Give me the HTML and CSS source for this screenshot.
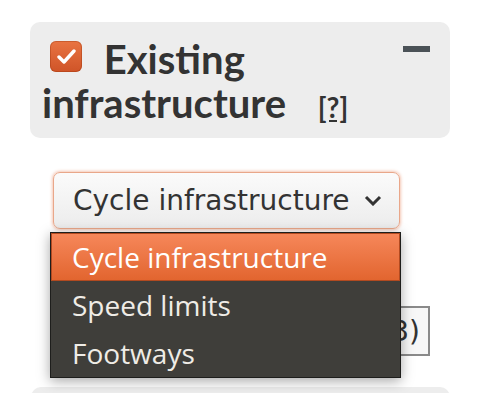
FILE: index.html
```html
<!DOCTYPE html>
<html lang="en">
<head>
    <meta charset="UTF-8">
    <title>Existing infrastructure</title>
    <link rel="stylesheet" href="styles.css">
</head>
<body>
    <div class="panel">
        <div class="panel-head">
            <h2 class="title">
                <span class="check"><svg width="19" height="15" viewBox="0 0 19 15"><path d="M2 8 L7 13 L17 2" fill="none" stroke="#fff" stroke-width="3.4" stroke-linecap="round" stroke-linejoin="round"/></svg></span>
                Existing infrastructure <a class="help" href="#">[?]</a>
            </h2>
            <div class="collapse"></div>
        </div>
    </div>

    <div class="controls">
        <div class="select">
            <span>Cycle infrastructure</span>
            <svg class="chev" width="18" height="11" viewBox="0 0 18 11"><path d="M2 2 L9 9 L16 2" fill="none" stroke="#333" stroke-width="3"/></svg>
        </div>
        <div class="row">
            <button class="btn">Layers (3)</button>
        </div>
    </div>

    <div class="panel next"></div>

    <ul class="menu">
        <li class="opt selected">Cycle infrastructure</li>
        <li class="opt">Speed limits</li>
        <li class="opt">Footways</li>
    </ul>
</body>
</html>
```

FILE: styles.css
```css
html {
    overflow: hidden;
}

body {
    margin: 0;
    background: #fff;
    font-family: 'DejaVu Sans', sans-serif;
    color: #333;
}

.panel {
    margin: 22px 33px 0 30px;
    padding: 15px 12px 13px 12px;
    background: #ededed;
    border-radius: 10px;
}

.panel-head {
    display: flex;
    justify-content: space-between;
    align-items: flex-start;
}

.title {
    margin: 0;
    font-family: Lato, sans-serif;
    font-weight: 700;
    font-size: 40px;
    line-height: 44px;
    color: #333;
}

.check {
    display: inline-block;
    box-sizing: border-box;
    width: 32px;
    height: 31px;
    padding: 8px 0 0 7px;
    margin: 0 12px 0 8px;
    border-radius: 6px;
    background: linear-gradient(#e97442, #cf5428);
    box-shadow: inset 0 0 0 1px rgba(150, 50, 10, 0.35);
    vertical-align: 2px;
}

.check svg {
    display: block;
}

.help {
    margin-left: 22px;
    font-size: 28px;
    line-height: 20px;
    color: #333;
    text-decoration: underline;
}

.collapse {
    flex-shrink: 0;
    width: 27px;
    height: 6px;
    margin: 9px 8px 0 0;
    background: #4b5257;
}

.controls {
    padding: 34px 53px 0 53px;
}

.select {
    display: flex;
    align-items: center;
    justify-content: space-between;
    box-sizing: border-box;
    width: 347px;
    height: 57px;
    padding: 0 17px 0 19px;
    border: 1px solid #e9a78a;
    border-radius: 7px;
    background: linear-gradient(#fbfbfb, #ececec);
    box-shadow: 0 0 3px 1px rgba(230, 130, 90, 0.45);
    font-size: 28px;
    color: #333;
}

.row {
    display: flex;
    justify-content: flex-end;
    margin-top: 77px;
}

.btn {
    height: 50px;
    padding: 0 8px;
    border: 2px solid #8a8a8a;
    background: #f7f7f7;
    font-family: 'DejaVu Sans', sans-serif;
    font-size: 28px;
    color: #333;
}

.next {
    margin-top: 31px;
    margin-left: 31px;
    height: 20px;
    padding: 0;
}

.menu {
    position: absolute;
    left: 50px;
    top: 232px;
    width: 349px;
    margin: 0;
    padding: 0;
    list-style: none;
    background: #3f3e3a;
    border: 1px solid #1e1e1c;
    box-shadow: 0 3px 12px rgba(0, 0, 0, 0.35);
}

.opt {
    height: 48px;
    padding-left: 21px;
    font-family: 'Open Sans', sans-serif;
    font-size: 28px;
    line-height: 48px;
    color: #efece6;
}

.opt.selected {
    height: 46px;
    line-height: 46px;
    background: linear-gradient(#f6875a, #e2652f);
    border: 1px solid #b24a20;
    padding-left: 20px;
    color: #fff;
}
```
